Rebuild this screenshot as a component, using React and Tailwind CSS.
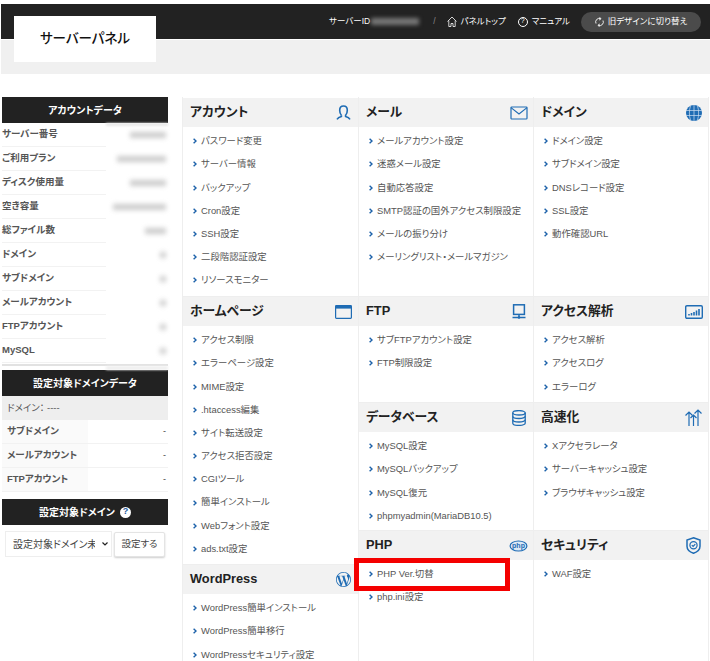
import React from "react";
import { SiWordpress } from "react-icons/si";

const font = "[font-family:'Liberation_Sans','Noto_Sans_CJK_JP',sans-serif] [font-feature-settings:'palt']";

/* icons, all blue line drawings from the panel headers */
const blue = "#1f6cb4";

function UserIcon() {
  return (
    <svg width="15" height="16" viewBox="0 0 15 16" fill="none" stroke={blue} strokeWidth="1.6">
      <path d="M5.4 10.2C4 8.8 3.7 7 3.7 5.2 3.7 2.8 5.2 1 7.5 1s3.8 1.8 3.8 4.2c0 1.8-.3 3.6-1.7 5v1.2c1.7.5 3.4 1.2 4.4 2.9" />
      <path d="M5.4 10.2v1.2c-1.7.5-3.4 1.2-4.4 2.9" />
    </svg>
  );
}

function MailIcon() {
  return (
    <svg width="18" height="14" viewBox="0 0 18 14" fill="none" stroke={blue} strokeWidth="1.2">
      <rect x="1" y="1" width="16" height="12" rx="0.8" />
      <path d="M1 1.6 9 8l8-6.4" />
    </svg>
  );
}

function GlobeIcon() {
  return (
    <svg width="16" height="16" viewBox="0 0 16 16" fill="none">
      <circle cx="8" cy="8" r="8" fill={blue} />
      <path d="M0 5.5h16M0 10.5h16M8 0v16M4.5 1C3 5 3 11 4.5 15M11.5 1c1.5 4 1.5 10 0 14" stroke="#cfe0f2" strokeWidth="0.7" />
    </svg>
  );
}

function WindowIcon() {
  return (
    <svg width="17" height="14" viewBox="0 0 17 14" fill="none">
      <rect x="0.6" y="0.6" width="15.8" height="12.8" rx="0.8" stroke={blue} strokeWidth="1.2" />
      <rect x="0.6" y="0.6" width="15.8" height="3" fill={blue} />
    </svg>
  );
}

function MonitorIcon() {
  return (
    <svg width="14" height="16" viewBox="0 0 14 16" fill="none" stroke={blue} strokeWidth="1.5">
      <rect x="1.6" y="0.8" width="10.8" height="9.6" />
      <path d="M7 10.5v3M0.5 13.5h13" />
      <circle cx="7" cy="13.5" r="1.3" fill={blue} stroke="none" />
    </svg>
  );
}

function ChartIcon() {
  return (
    <svg width="18" height="14" viewBox="0 0 18 14" fill="none">
      <rect x="0.7" y="0.7" width="16.6" height="12.6" rx="1.2" stroke={blue} strokeWidth="1.4" />
      <path d="M4 10.5V9M6.5 10.5V8M9 10.5V7M11.5 10.5V5.5M14 10.5V4" stroke={blue} strokeWidth="1.6" />
    </svg>
  );
}

function DatabaseIcon() {
  return (
    <svg width="14" height="16" viewBox="0 0 14 16" fill="none" stroke={blue} strokeWidth="1.3">
      <ellipse cx="7" cy="2.8" rx="6.2" ry="2.2" />
      <path d="M0.8 2.8v10.4c0 1.2 2.8 2.2 6.2 2.2s6.2-1 6.2-2.2V2.8" />
      <path d="M0.8 6.3c0 1.2 2.8 2.2 6.2 2.2s6.2-1 6.2-2.2M0.8 9.8c0 1.2 2.8 2.2 6.2 2.2s6.2-1 6.2-2.2" />
    </svg>
  );
}

function ArrowsIcon() {
  return (
    <svg width="17" height="17" viewBox="0 0 17 17" fill="none" stroke={blue} strokeWidth="1.2">
      <path d="M13 17V1M9.5 4.5 13 1l3.5 3.5" />
      <path d="M8.5 17V6M5.5 9l3-3 3 3" />
      <path d="M4 17V3M0.5 6.5 4 3l3.5 3.5" />
    </svg>
  );
}

function PhpIcon() {
  return (
    <svg width="19" height="12" viewBox="0 0 19 12">
      <ellipse cx="9.5" cy="6" rx="9" ry="5.5" fill={blue} />
      <ellipse cx="9.5" cy="6" rx="7.8" ry="4.5" fill="#dbe8f5" />
      <text x="9.5" y="8" textAnchor="middle" fontSize="7" fontWeight="700" fill={blue} fontFamily="Liberation Sans">php</text>
    </svg>
  );
}

function ShieldIcon() {
  return (
    <svg width="15" height="17" viewBox="0 0 15 17" fill="none" stroke={blue}>
      <path d="M7.5 0.8 14 3v6.2c0 3.4-3 5.8-6.5 7C4 15 1 12.6 1 9.2V3z" strokeWidth="1.5" />
      <circle cx="7.5" cy="8.3" r="3.6" strokeWidth="1.2" />
      <path d="M5.8 8.2l1.3 1.3 2.2-2.4" strokeWidth="1.2" />
    </svg>
  );
}

function Chevron() {
  return (
    <svg width="4" height="6" viewBox="0 0 4 6" fill="none" stroke="#1d62aa" strokeWidth="1.4" className="shrink-0">
      <path d="M0.6 0.7 3 3 0.6 5.3" />
    </svg>
  );
}

const col1 = [
  { title: "アカウント", icon: <UserIcon />, h: "h-[199px]", items: ["パスワード変更", "サーバー情報", "バックアップ", "Cron設定", "SSH設定", "二段階認証設定", "リソースモニター"] },
  { title: "ホームページ", icon: <WindowIcon />, h: "h-[268px]", items: ["アクセス制限", "エラーページ設定", "MIME設定", ".htaccess編集", "サイト転送設定", "アクセス拒否設定", "CGIツール", "簡単インストール", "Webフォント設定", "ads.txt設定"] },
  { title: "WordPress", icon: <SiWordpress size={15} color={blue} />, h: "h-[97px]", items: ["WordPress簡単インストール", "WordPress簡単移行", "WordPressセキュリティ設定"] },
];

const col2 = [
  { title: "メール", icon: <MailIcon />, h: "h-[199px]", items: ["メールアカウント設定", "迷惑メール設定", "自動応答設定", "SMTP認証の国外アクセス制限設定", "メールの振り分け", "メーリングリスト・メールマガジン"] },
  { title: "FTP", icon: <MonitorIcon />, h: "h-[106px]", items: ["サブFTPアカウント設定", "FTP制限設定"] },
  { title: "データベース", icon: <DatabaseIcon />, h: "h-[128px]", items: ["MySQL設定", "MySQLバックアップ", "MySQL復元", "phpmyadmin(MariaDB10.5)"] },
  { title: "PHP", icon: <PhpIcon />, h: "h-[131px]", items: ["PHP Ver.切替", "php.ini設定"], marked: 0 },
];

const col3 = [
  { title: "ドメイン", icon: <GlobeIcon />, h: "h-[199px]", items: ["ドメイン設定", "サブドメイン設定", "DNSレコード設定", "SSL設定", "動作確認URL"] },
  { title: "アクセス解析", icon: <ChartIcon />, h: "h-[106px]", items: ["アクセス解析", "アクセスログ", "エラーログ"] },
  { title: "高速化", icon: <ArrowsIcon />, h: "h-[128px]", items: ["Xアクセラレータ", "サーバーキャッシュ設定", "ブラウザキャッシュ設定"] },
  { title: "セキュリティ", icon: <ShieldIcon />, h: "h-[131px]", items: ["WAF設定"] },
];

const accountRows = [
  ["サーバー番号", "w-[36px]"],
  ["ご利用プラン", "w-[49px]"],
  ["ディスク使用量", "w-[36px]"],
  ["空き容量", "w-[53px]"],
  ["総ファイル数", "w-[21px]"],
  ["ドメイン", "w-[6px]"],
  ["サブドメイン", "w-[6px]"],
  ["メールアカウント", "w-[6px]"],
  ["FTPアカウント", "w-[6px]"],
  ["MySQL", "w-[6px]"],
];

function Section({ title, icon, h, items, marked }) {
  return (
    <section className={`${h} border-t border-[#eeeeee] first:border-t-transparent`}>
      <div className="flex h-[29px] items-center justify-between bg-[#f2f2f2] pl-[7px] pr-[5px]">
        <h2 className="pb-[2px] text-[12.8px] font-bold text-[#222222]">{title}</h2>
        <span className="flex w-[19px] justify-center">{icon}</span>
      </div>
      <ul className="pt-[2.6px]">
        {items.map((item, i) => (
          <li key={item} className="relative flex h-[23.2px] items-center gap-[4px] pl-[10px] text-[9.4px] text-[#555555]">
            <Chevron />
            <span className="whitespace-nowrap">{item}</span>
            {marked === i && (
              <span className="absolute left-[-5px] top-[-5px] h-[33px] w-[156px] border-[5px] border-[#f40000]" />
            )}
          </li>
        ))}
      </ul>
    </section>
  );
}

function SideTitle({ children }) {
  return (
    <div className="flex h-[26px] items-center justify-center gap-[5px] bg-[#222222] text-[10px] font-bold text-white">
      {children}
    </div>
  );
}

export default function App() {
  return (
    <div className={`${font} relative h-[661px] w-[710px] overflow-hidden bg-white`}>
      {/* HEADER */}
      <header className="pt-[4px] pl-[1px]">
        <div className="flex h-[35px] items-center justify-end bg-[#222222] pr-[9px] text-[8.5px] text-white">
          <span>サーバーID</span>
          <span className="ml-[1px] h-[7px] w-[48px] bg-[#777777] blur-[2px]" />
          <span className="ml-[14px] text-[#888888]">/</span>
          <svg width="10" height="11" viewBox="0 0 10 11" fill="none" stroke="#fff" strokeWidth="0.8" className="ml-[11px]">
            <path d="M0.5 5.5 5 1l4.5 4.5M1.8 4.5v6h2.2V7.5h2v3h2.2v-6" />
          </svg>
          <span className="ml-[4px]">パネルトップ</span>
          <span className="ml-[12px] flex h-[10px] w-[10px] items-center justify-center rounded-full border border-white text-[7px]">?</span>
          <span className="ml-[4px]">マニュアル</span>
          <button className="ml-[11px] flex h-[20px] w-[120px] items-center justify-center gap-[4px] rounded-full bg-[#4b4b4b] text-[8.5px] text-white">
            <svg width="9" height="10" viewBox="0 0 9 10" fill="none" stroke="#fff" strokeWidth="0.9">
              <path d="M1 6.5A3.6 3.6 0 0 1 5.5 1.6M8 3.5A3.6 3.6 0 0 1 3.5 8.4" />
              <path d="M4.6 0.2 6 1.8 4.2 3M4.4 9.8 3 8.2 4.8 7" />
            </svg>
            旧デザインに切り替え
          </button>
        </div>
        <div className="h-[35px] border-t border-white bg-[#f0f0f0]" />
      </header>

      {/* logo sits over the dark bar and the grey band */}
      <div className="absolute left-[14px] top-[16px] flex h-[46px] w-[142px] items-center justify-center bg-white text-[13.5px] font-medium text-[#111111]">
        サーバーパネル
      </div>

      <div className="mt-[23px] flex items-start">
        {/* SIDEBAR */}
        <aside className="ml-[2px] w-[166px]">
          <SideTitle>アカウントデータ</SideTitle>
          <div className="ml-[104px] h-0 overflow-visible">
            <div className="h-[3px] bg-[#e8e8e8] blur-[1px]" />
          </div>
          <div className="border-b-2 border-[#e2e2e2] pb-[1px]">
            {accountRows.map(([label, w]) => (
              <div key={label} className="flex h-[24px] items-stretch">
                <div className="flex w-[104px] items-center border-b border-[#f2f2f2] text-[9.5px] font-bold text-[#555555]">
                  {label}
                </div>
                <div className="flex flex-1 items-center justify-end pr-[2px]">
                  <span className={`${w} h-[6px] bg-[#cccccc] blur-[2.5px]`} />
                </div>
              </div>
            ))}
          </div>
          <div className="ml-[104px] h-[4px] bg-[#f0f0f0] blur-[1px]" />

          <SideTitle>設定対象ドメインデータ</SideTitle>
          <div className="flex h-[24px] items-center bg-[#eeeeee] pl-[5px] text-[9.5px] text-[#555555]">ドメイン： ----</div>
          {["サブドメイン", "メールアカウント", "FTPアカウント"].map((label) => (
            <div key={label} className="flex h-[24px] items-stretch">
              <div className="flex w-[86px] items-center border-b border-[#f2f2f2] bg-[#fafafa] pl-[5px] text-[9.5px] font-bold text-[#555555]">
                {label}
              </div>
              <div className="flex flex-1 items-center justify-end border-b border-[#f2f2f2] pr-[2px] text-[9px] text-[#444444]">-</div>
            </div>
          ))}

          <div className="mt-[7px]">
            <SideTitle>
              設定対象ドメイン
              <span className="flex h-[11px] w-[11px] items-center justify-center rounded-full bg-white text-[9px] font-bold text-[#1f5c9e]">?</span>
            </SideTitle>
          </div>
          <div className="mt-[6px] flex items-center gap-[2px] pl-[3px]">
            <div className="relative">
              <select className="block h-[26px] w-[107px] appearance-none border border-[#eeeeee] bg-white pl-[7px] pr-[16px] text-[10px] text-[#444444]">
                <option>設定対象ドメイン未選択</option>
              </select>
              <svg width="6" height="4" viewBox="0 0 6 4" fill="none" stroke="#222" strokeWidth="1.2" className="absolute right-[4px] top-[11px]">
                <path d="M0.5 0.5 3 3 5.5 0.5" />
              </svg>
            </div>
            <button className="h-[25px] w-[51px] rounded-[2px] border border-[#e4e4e4] bg-white text-[9.5px] text-[#444444] shadow-[0_1px_2px_rgba(0,0,0,0.2)]">
              設定する
            </button>
          </div>
        </aside>

        {/* MENU COLUMNS */}
        <main className="ml-[14px] flex h-[600px] w-[527px] border-x border-[#eeeeee]">
          <div className="w-[175px] shrink-0">
            {col1.map((s) => <Section key={s.title} {...s} />)}
          </div>
          <div className="w-[175px] shrink-0 border-l border-[#eeeeee]">
            {col2.map((s) => <Section key={s.title} {...s} />)}
          </div>
          <div className="flex-1 border-l border-[#eeeeee]">
            {col3.map((s) => <Section key={s.title} {...s} />)}
          </div>
        </main>
      </div>
    </div>
  );
}
